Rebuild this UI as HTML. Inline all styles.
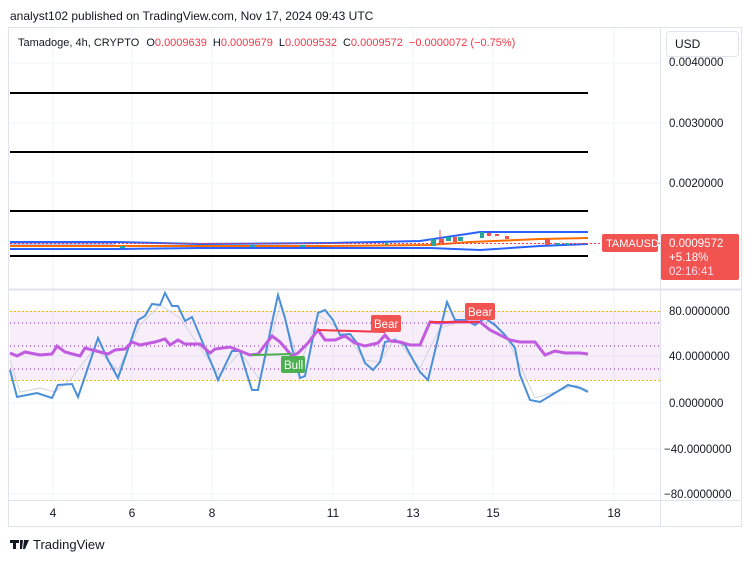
<!DOCTYPE html>
<html><head><meta charset="utf-8"><style>
body{margin:0;width:752px;height:562px;background:#fff;font-family:"Liberation Sans",sans-serif;overflow:hidden}
</style></head><body>
<svg width="752" height="562" xmlns="http://www.w3.org/2000/svg" font-family="Liberation Sans, sans-serif">
<text x="10" y="20" font-size="12" fill="#131722">analyst102 published on TradingView.com, Nov 17, 2024 09:43 UTC</text>
<rect x="8.5" y="27.5" width="733" height="499" fill="#fff" stroke="#e0e3eb"/>
<g stroke="#f0f3fa" stroke-width="1">
<line x1="53" y1="28" x2="53" y2="500"/><line x1="132" y1="28" x2="132" y2="500"/><line x1="212" y1="28" x2="212" y2="500"/><line x1="333" y1="28" x2="333" y2="500"/><line x1="413" y1="28" x2="413" y2="500"/><line x1="493" y1="28" x2="493" y2="500"/><line x1="614" y1="28" x2="614" y2="500"/>
<line x1="9" y1="63" x2="660" y2="63"/><line x1="9" y1="123" x2="660" y2="123"/><line x1="9" y1="183" x2="660" y2="183"/><line x1="9" y1="243" x2="660" y2="243"/>
<line x1="9" y1="311" x2="660" y2="311"/><line x1="9" y1="356" x2="660" y2="356"/><line x1="9" y1="403" x2="660" y2="403"/><line x1="9" y1="449" x2="660" y2="449"/><line x1="9" y1="494" x2="660" y2="494"/>
</g>
<line x1="9" y1="289.5" x2="742" y2="289.5" stroke="#e0e3eb" stroke-width="2"/>
<line x1="9" y1="500.5" x2="742" y2="500.5" stroke="#e0e3eb"/>
<line x1="660.5" y1="28" x2="660.5" y2="527" stroke="#e0e3eb"/>
<text x="18" y="46" font-size="11" fill="#131722">Tamadoge, 4h, CRYPTO <tspan dx="4">O</tspan><tspan fill="#f23645">0.0009639</tspan><tspan dx="6">H</tspan><tspan fill="#f23645">0.0009679</tspan><tspan dx="6">L</tspan><tspan fill="#f23645">0.0009532</tspan><tspan dx="6">C</tspan><tspan fill="#f23645">0.0009572</tspan><tspan dx="6" fill="#f23645">−0.0000072 (−0.75%)</tspan></text>
<rect x="666.5" y="31.5" width="72" height="25" rx="3" fill="#fff" stroke="#e0e3eb"/>
<text x="675" y="48" font-size="12" fill="#131722">USD</text>
<g font-size="11.5" fill="#131722">
<text x="669" y="66">0.0040000</text><text x="669" y="127">0.0030000</text><text x="669" y="187">0.0020000</text>
<text x="669" y="315">80.0000000</text><text x="669" y="360">40.0000000</text><text x="669" y="407">0.0000000</text><text x="664" y="453">−40.0000000</text><text x="664" y="498">−80.0000000</text>
</g>
<g stroke="#000" stroke-width="2"><line x1="10" y1="93" x2="588" y2="93"/><line x1="10" y1="152" x2="588" y2="152"/><line x1="10" y1="211" x2="588" y2="211"/><line x1="10" y1="256" x2="588" y2="256"/></g>
<rect x="10" y="241" width="105" height="6" fill="#2962ff" opacity="0.35"/>
<polyline points="10,242 115,242 200,244 330,243 420,241 440,238 480,232 588,232" fill="none" stroke="#2962ff" stroke-width="2"/>
<polyline points="10,249 115,249 200,248 330,248 430,248 480,250 540,246 588,244" fill="none" stroke="#2962ff" stroke-width="2"/>
<polyline points="10,246 200,246 330,246 430,245 470,242 540,239 588,238" fill="none" stroke="#ff6d00" stroke-width="2"/>
<line x1="10" y1="243.5" x2="660" y2="243.5" stroke="#f23645" stroke-dasharray="2 2"/>
<g fill="#26a69a"><rect x="431" y="239" width="5" height="7"/><rect x="446" y="237" width="5" height="4"/><rect x="458" y="237" width="5" height="4"/><rect x="480" y="232" width="4" height="6"/><rect x="555" y="243" width="4" height="2"/><rect x="565" y="243" width="4" height="2"/><rect x="120" y="246" width="5" height="2"/><rect x="250" y="245" width="5" height="2"/><rect x="300" y="245" width="5" height="2"/><rect x="385" y="242" width="3" height="3"/></g>
<g fill="#ef5350"><rect x="439" y="239" width="5" height="4"/><rect x="453" y="237" width="4" height="5"/><rect x="487" y="233" width="4" height="3"/><rect x="495" y="234" width="4" height="2"/><rect x="505" y="236" width="4" height="3"/><rect x="545" y="239" width="5" height="6"/><line x1="440" y1="230" x2="440" y2="240" stroke="#ef5350"/></g>
<rect x="602" y="234" width="56" height="18" rx="2" fill="#f05350"/>
<text x="606" y="247" font-size="11" fill="#fff">TAMAUSD</text>
<rect x="661" y="234" width="78" height="46" rx="2" fill="#f05350"/>
<text x="669" y="247" font-size="11.5" fill="#fff">0.0009572</text>
<text x="669" y="261" font-size="11.5" fill="#fff">+5.18%</text>
<text x="669" y="275" font-size="11.5" fill="#fde">02:16:41</text>
<rect x="10" y="311" width="650" height="69" fill="#9c27b0" opacity="0.08"/>
<line x1="10" y1="311.5" x2="660" y2="311.5" stroke="#e6c000" stroke-dasharray="2 2"/>
<line x1="10" y1="380.5" x2="660" y2="380.5" stroke="#e6c000" stroke-dasharray="2 2"/>
<g stroke="#7b1fa2" stroke-dasharray="1 3"><line x1="10" y1="323" x2="660" y2="323"/><line x1="10" y1="346" x2="660" y2="346"/><line x1="10" y1="369" x2="660" y2="369"/></g>
<polyline points="10,360 20,392 40,388 55,392 70,380 95,348 118,370 140,325 160,305 180,318 205,355 220,375 240,352 260,380 280,305 300,365 318,315 330,322 350,340 365,360 380,362 395,338 420,368 440,328 460,322 490,322 505,335 520,365 535,398 555,392 575,385 588,390" fill="none" stroke="#d1d4dc" stroke-width="1"/>
<polyline points="10,370 17,397 27,395 37,393 52,398 58,385 72,384 78,397 98,338 108,360 118,378 138,320 145,316 152,304 160,305 165,293 172,306 178,306 185,321 192,317 215,372 218,380 232,351 240,351 245,368 252,390 258,390 273,318 278,295 285,318 292,348 300,378 305,376 318,313 325,310 333,320 340,335 350,334 357,343 365,363 373,370 380,362 385,342 395,340 405,345 412,358 420,372 428,380 440,330 447,302 455,320 465,320 475,325 485,318 495,325 505,335 515,348 520,375 530,400 540,402 555,393 568,385 580,388 588,392" fill="none" stroke="#4a90d9" stroke-width="2"/>
<polyline points="10,353 17,356 25,352 40,355 52,354 57,346 65,352 80,356 85,348 100,352 108,354 115,350 125,349 132,342 140,345 155,342 165,339 170,345 178,340 185,344 200,344 210,353 215,349 230,347 250,355 258,354 265,345 272,336 280,342 292,356 298,353 308,343 318,330 325,340 335,340 345,336 355,343 365,346 378,343 385,335 390,341 400,342 410,345 420,345 430,322 440,323 455,322 470,322 480,322 490,330 500,335 510,340 520,342 535,342 545,355 555,351 565,353 580,353 588,354" fill="none" stroke="#c15be0" stroke-width="3"/>
<line x1="252" y1="355" x2="292" y2="354" stroke="#4caf50" stroke-width="2"/>
<line x1="318" y1="330" x2="385" y2="332" stroke="#f23645" stroke-width="2"/>
<line x1="430" y1="322" x2="480" y2="322" stroke="#f23645" stroke-width="2"/>
<rect x="281" y="356" width="24" height="17" rx="2" fill="#4caf50"/><text x="284" y="369" font-size="11.5" fill="#fff">Bull</text>
<rect x="371" y="315" width="30" height="17" rx="2" fill="#f05350"/><text x="374" y="328" font-size="11.5" fill="#fff">Bear</text>
<rect x="465" y="303" width="30" height="17" rx="2" fill="#f05350"/><text x="468" y="316" font-size="11.5" fill="#fff">Bear</text>
<g font-size="12" fill="#131722" text-anchor="middle"><text x="53" y="517">4</text><text x="132" y="517">6</text><text x="212" y="517">8</text><text x="333" y="517">11</text><text x="413" y="517">13</text><text x="493" y="517">15</text><text x="614" y="517">18</text></g>
<path d="M10 540h9v3h-3v6h-3v-6h-3z M20 540h3l-1 9h-2z M24 540h5l-4 9h-2z" fill="#131722"/>
<text x="33" y="549" font-size="13" fill="#131722">TradingView</text>
</svg>
</body></html>
